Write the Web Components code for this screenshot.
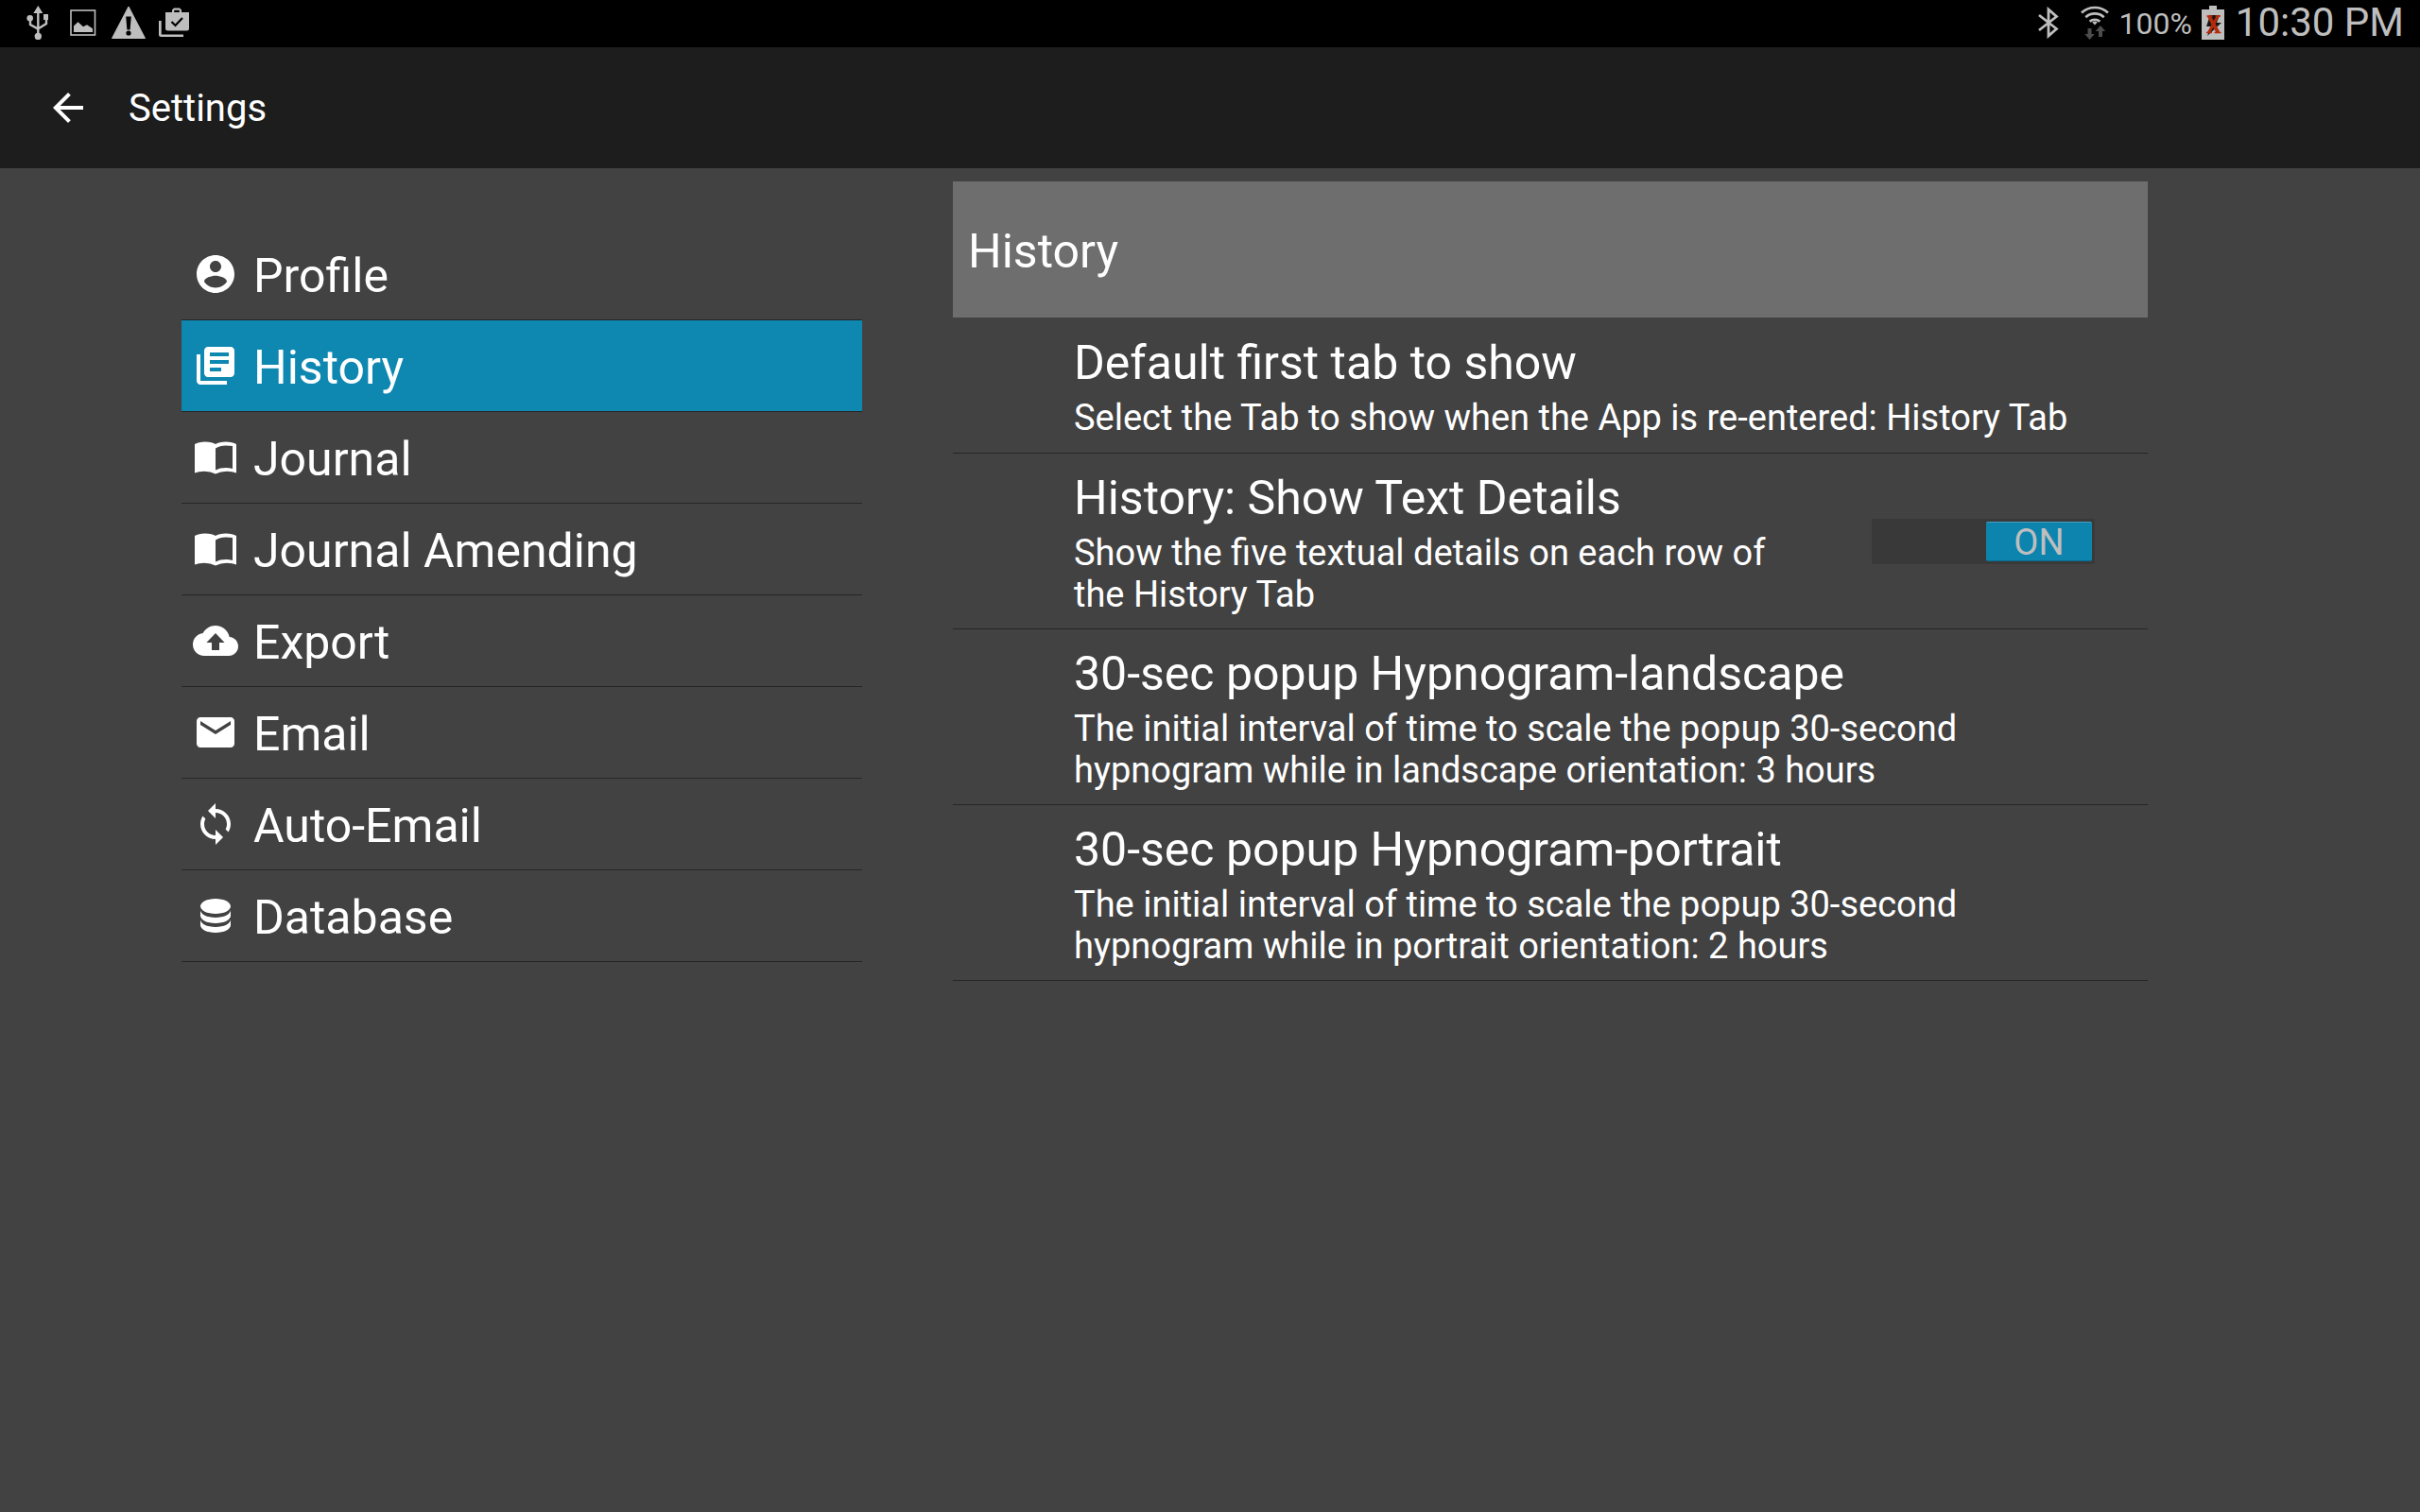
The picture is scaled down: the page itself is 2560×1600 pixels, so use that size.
<!DOCTYPE html>
<html lang="en">
<head>
<meta charset="utf-8">
<meta name="viewport" content="width=device-width, initial-scale=1">
<title>Settings</title>
<style>
  html, body { margin: 0; min-height: 100%; background: #424242; }
  body { font-family: Roboto, "Noto Sans", sans-serif; color: #fff; }
</style>
</head>
<body>
<settings-app>
  <status-bar slot="status" battery="100%" time="10:30 PM"></status-bar>
  <app-bar slot="bar">Settings</app-bar>
  <nav-list slot="nav">
    <nav-item icon="profile" href="#profile">Profile</nav-item>
    <nav-item icon="history" href="#history" selected>History</nav-item>
    <nav-item icon="book" href="#journal">Journal</nav-item>
    <nav-item icon="book" href="#journal-amending">Journal Amending</nav-item>
    <nav-item icon="upload" href="#export">Export</nav-item>
    <nav-item icon="mail" href="#email">Email</nav-item>
    <nav-item icon="sync" href="#auto-email">Auto-Email</nav-item>
    <nav-item icon="database" href="#database">Database</nav-item>
  </nav-list>
  <pref-panel slot="panel">
    <span slot="heading">History</span>
    <pref-row>
      <span slot="title">Default first tab to show</span>
      <span slot="summary">Select the Tab to show when the App is re-entered: History Tab</span>
    </pref-row>
    <pref-switch>
      <span slot="title">History: Show Text Details</span>
      <span slot="summary">Show the five textual details on each row of the History Tab</span>
    </pref-switch>
    <pref-row>
      <span slot="title">30-sec popup Hypnogram-landscape</span>
      <span slot="summary">The initial interval of time to scale the popup 30-second hypnogram while in landscape orientation: 3 hours</span>
    </pref-row>
    <pref-row>
      <span slot="title">30-sec popup Hypnogram-portrait</span>
      <span slot="summary">The initial interval of time to scale the popup 30-second hypnogram while in portrait orientation: 2 hours</span>
    </pref-row>
  </pref-panel>
</settings-app>

<script>
class Base extends HTMLElement {
  constructor() {
    super();
    this.attachShadow({ mode: 'open' });
  }
  connectedCallback() {
    this.shadowRoot.innerHTML =
      '<style>:host,*{box-sizing:border-box}' + this.styles() + '</style>' + this.markup();
  }
  styles() { return ''; }
  markup() { return '<slot></slot>'; }
}

class SettingsApp extends Base {
  styles() { return `
    :host { display: flex; flex-direction: column; min-height: 100vh; }
    main {
      display: grid; grid-template-columns: minmax(0, 45fr) minmax(0, 79fr);
      column-gap: 96px; align-items: start;
      padding: 14px 288px 32px 192px;
    }
    .nav { padding-top: 50px; }
  `; }
  markup() { return `
    <slot name="status"></slot>
    <slot name="bar"></slot>
    <main>
      <div class="nav"><slot name="nav"></slot></div>
      <slot name="panel"></slot>
    </main>`; }
}

/* Status-bar glyphs: width, height, left edge of the view box, shapes. */
const STATUS = {
  usb: [32, 36, 0, `<g fill="none" stroke="currentColor" stroke-width="2.4"><path d="M12.3 33V7M4 13v7l8.300 4.600M21 13v6l-8.700 5.600"/></g>
    <path fill="currentColor" d="M12.300 0L17.300 8H7.300zM18 9h5v6h-5z"/><circle cx="3.700" cy="13.200" r="3.300" fill="currentColor"/><circle cx="12.300" cy="32.500" r="3.700" fill="currentColor"/>`],
  photo: [28, 28, 0, `<rect x="1" y="1" width="25.500" height="26" fill="none" stroke="currentColor" stroke-width="1.600"/>
    <path fill="currentColor" d="M4 17.500l4.500-4.200 5.500 5 4-2 6 4v3.700H4z"/>`],
  warning: [38, 36, -2, `<path fill="currentColor" stroke="currentColor" stroke-linejoin="round" d="M18 1L35.500 34.500H.5z"/>
    <path fill="#000" d="M15.200 11.500h5.600l-1.200 14h-3.200z"/><circle cx="18" cy="29" r="2.600" fill="#000"/>`],
  tasks: [32, 32, 0, `<path fill="currentColor" fill-rule="evenodd" d="M14 5V2.500L16 .5h6l2 2V5h8v17a2.500 2.500 0 0 1-2.500 2.500h-20A2.500 2.500 0 0 1 7 22V5zM16.200 5h5.600V2.700h-5.600z"/>
    <path fill="none" stroke="#000" stroke-width="2.200" d="M13.500 15l4 4L25 11"/>
    <path fill="currentColor" d="M0 14h2.700v14.500H26V31H2.500A2.500 2.500 0 0 1 0 28.500z"/>`],
  bluetooth: [22, 34, 0, `<path fill="none" stroke="currentColor" stroke-width="2.800" d="M1 9l18.500 14.500L11 31V3l8.500 7.500L1 25"/>`],
  wifi: [30, 36, 0, `<g fill="none" stroke="currentColor" stroke-width="2.600"><path d="M1 7.500a20.500 20.500 0 0 1 28 0M5.300 12.200a14.300 14.300 0 0 1 19.400 0M9.600 16.800a8 8 0 0 1 10.800 0"/></g>
    <path fill="currentColor" d="M12.200 17.600q2.800-2 5.600 0L15 20.500z"/>
    <path fill="#4c4c4c" d="M7.500 24h4v6h3.200l-5.200 6-5.200-6h3.200zM19 33h4v-6h3.200L21 21l-5.200 6H19z"/>`],
  battery: [24, 36, 0, `<path fill="currentColor" d="M8 0h8v4h8v32H0V4h8z"/>
    <path fill="#161616" d="M9 10h10l-3 8h5L6 32l4-10H5z"/>
    <g fill="none" stroke="#b52b0b"><path stroke-width="3.800" d="M7.500 10.500l10 18"/><path stroke-width="3" d="M17.500 10.500l-10 18"/><path stroke-width="1.400" d="M5.500 11h6M14.500 11h5.500M5 28.500h6M13.500 28.500h7"/></g>`]
};
const statusIcon = n => {
  const [w, h, x, body] = STATUS[n];
  return `<svg width="${w}" height="${h}" viewBox="${x} 0 ${w} ${h}" aria-hidden="true">${body}</svg>`;
};

class StatusBar extends Base {
  styles() { return `
    :host { display: flex; align-items: center; justify-content: space-between; height: 50px;
      padding: 0 17px 2px 28px; background: #000; color: #bebebe; }
    div { display: flex; align-items: center; }
    svg { display: block; flex: none; }
    .left { gap: 14px; }
    .right { gap: 10px; }
    .radio { display: flex; gap: 23px; }
    .battery { font-size: 32px; line-height: 40px; padding-top: 2px; }
    time { font-size: 42px; line-height: 48px; padding-left: 2px; }
  `; }
  markup() { return `
    <div class="left">${['usb', 'photo', 'warning', 'tasks'].map(statusIcon).join('')}</div>
    <div class="right">
      <div class="radio">${statusIcon('bluetooth')}${statusIcon('wifi')}</div>
      <span class="battery">${this.getAttribute('battery')}</span>
      ${statusIcon('battery')}
      <time>${this.getAttribute('time')}</time>
    </div>`; }
}

class AppBar extends Base {
  styles() { return `
    :host { display: flex; align-items: center; gap: 40px; min-height: 128px; padding: 0 48px; background: #1d1d1d; }
    button { appearance: none; border: 0; padding: 0; margin: 0; background: none; color: inherit; display: flex; }
    h1 { margin: 0; padding-top: 2px; font-size: 40px; line-height: 44px; font-weight: 400; }
  `; }
  markup() { return `
    <button type="button" aria-label="Back">
      <svg width="48" height="48" viewBox="0 0 24 24" fill="currentColor"><path d="M20 11H7.830l5.590-5.590L12 4l-8 8 8 8 1.410-1.410L7.830 13H20v-2z"/></svg>
    </button>
    <h1><slot></slot></h1>`; }
}

class NavList extends Base {
  styles() { return `nav { display: flex; flex-direction: column; }`; }
  markup() { return `<nav aria-label="Settings sections"><slot></slot></nav>`; }
}

const ICONS = {
  profile: '<path d="M12 2C6.480 2 2 6.480 2 12s4.480 10 10 10 10-4.480 10-10S17.520 2 12 2zm0 3c1.660 0 3 1.340 3 3s-1.340 3-3 3-3-1.340-3-3 1.340-3 3-3zm0 14.200c-2.500 0-4.710-1.280-6-3.220.03-1.990 4-3.080 6-3.080 1.990 0 5.970 1.090 6 3.080-1.290 1.940-3.500 3.220-6 3.220z"/>',
  history: '<path d="M4 6H2v14c0 1.100.9 2 2 2h14v-2H4V6zm16-4H8c-1.100 0-2 .9-2 2v12c0 1.100.9 2 2 2h12c1.100 0 2-.9 2-2V4c0-1.100-.9-2-2-2zm-1 5H9V5h10v2zm0 4H9V9h10v2zm-4 4H9v-2h6v2z"/>',
  book: '<path d="M12 5Q10.300 3.700 6.500 3.700 3 3.700 1 5v15.300q2-.9 5-.9 3.500 0 6 1.300 2.500-1.300 6-1.300 3 0 5 .9V5q-2-1.300-5.500-1.300Q13.700 3.700 12 5zM21 6v12q-1.600-.5-3.500-.5-3.300 0-5.500 1.200V7.200q2.200-1.500 5.500-1.500 1.900 0 3.500.3z"/>',
  upload: '<path d="M19.350 10.040C18.670 6.590 15.640 4 12 4 9.110 4 6.600 5.640 5.350 8.040 2.340 8.360 0 10.910 0 14c0 3.310 2.690 6 6 6h13c2.760 0 5-2.240 5-5 0-2.640-2.050-4.780-4.650-4.960zM14 13v4h-4v-4H7.200L12 8l4.800 5H14z"/>',
  mail: '<path d="M20 4H4c-1.100 0-1.990.9-1.990 2L2 18c0 1.100.9 2 2 2h16c1.100 0 2-.9 2-2V6c0-1.100-.9-2-2-2zm0 4l-8 5-8-5V6l8 5 8-5v2z"/>',
  sync: '<path d="M12 4V1L8 5l4 4V6c3.310 0 6 2.690 6 6 0 1.010-.25 1.970-.7 2.800l1.460 1.460C19.540 15.030 20 13.570 20 12c0-4.420-3.580-8-8-8zm0 14c-3.310 0-6-2.690-6-6 0-1.010.25-1.970.7-2.800L5.240 7.740C4.460 8.970 4 10.430 4 12c0 4.420 3.580 8 8 8v3l4-4-4-4v3z"/>',
  database: '<path d="M12 3C7.580 3 4 4.790 4 7s3.580 4 8 4 8-1.790 8-4-3.580-4-8-4zM4 9v3c0 2.210 3.580 4 8 4s8-1.790 8-4V9c0 2.210-3.580 4-8 4s-8-1.790-8-4zm0 5v3c0 2.210 3.580 4 8 4s8-1.790 8-4v-3c0 2.210-3.580 4-8 4s-8-1.790-8-4z"/>'
};

class NavItem extends Base {
  styles() { return `
    :host { display: block; border-bottom: 1px solid #262626; }
    :host([selected]) { background: #0e87b1; }
    a { display: flex; align-items: center; gap: 16px; min-height: 96px; padding: 0 12px; color: inherit; text-decoration: none; }
    svg { flex: none; display: block; }
    span { font-size: 50px; line-height: 56px; padding-top: 4px; }
  `; }
  markup() { return `
    <a href="${this.getAttribute('href')}"${this.hasAttribute('selected') ? ' aria-current="page"' : ''}>
      <svg width="48" height="48" viewBox="0 0 24 24" fill="currentColor" aria-hidden="true">${ICONS[this.getAttribute('icon')]}</svg>
      <span><slot></slot></span>
    </a>`; }
}

class PrefPanel extends Base {
  styles() { return `
    :host { display: block; }
    header { display: flex; align-items: center; min-height: 144px; padding: 4px 16px 0; background: #6e6e6e; }
    h2 { margin: 0; font-size: 50px; line-height: 56px; font-weight: 400; }
  `; }
  markup() { return `
    <section><header><h2><slot name="heading"></slot></h2></header><slot></slot></section>`; }
}

const ROW_CSS = `
  :host { display: block; border-bottom: 1px solid #262626; }
  .row { display: flex; align-items: center; width: 100%; min-height: 143px; margin: 0; border: 0;
    padding: 19px 32px 14px 128px; background: none; color: inherit; font-family: inherit; text-align: left; }
  .text { display: flex; flex-direction: column; gap: 8px; flex: 1; min-width: 0; }
  .title { font-size: 50px; line-height: 56px; }
  .summary { font-size: 38px; line-height: 44px; }
`;

class PrefRow extends Base {
  styles() { return ROW_CSS; }
  markup() { return `
    <button type="button" class="row">
      <span class="text">
        <span class="title"><slot name="title"></slot></span>
        <span class="summary"><slot name="summary"></slot></span>
      </span>
    </button>`; }
}

class PrefSwitch extends Base {
  styles() { return ROW_CSS + `
    :host { position: relative; }
    .row { gap: 56px; padding: 0 56px 0 128px; }
    .text { padding: 19px 0 14px; }
    input { position: absolute; inset: 0; width: 100%; height: 100%; margin: 0; opacity: 0; }
    .track { display: flex; flex: none; width: 236px; height: 48px; padding: 3px; background: #393939; }
    .thumb { display: flex; align-items: center; justify-content: center; width: 112px; border-radius: 2px;
      background: #0c84ae; color: #bebebe; font-size: 38px; line-height: 40px; padding-top: 2px;
      border-top: 1px solid #4a9dbd; border-bottom: 1px solid #09688a; }
    input:checked ~ .track { justify-content: flex-end; }
    input:not(:checked) ~ .track .thumb { background: #5a5a5a; border-color: #6e6e6e; }
  `; }
  markup() { return `
    <label class="row">
      <span class="text">
        <span class="title"><slot name="title"></slot></span>
        <span class="summary"><slot name="summary"></slot></span>
      </span>
      <input type="checkbox" role="switch" checked>
      <span class="track"><span class="thumb">ON</span></span>
    </label>`; }
  connectedCallback() {
    super.connectedCallback();
    const input = this.shadowRoot.querySelector('input');
    const thumb = this.shadowRoot.querySelector('.thumb');
    input.addEventListener('change', () => { thumb.textContent = input.checked ? 'ON' : 'OFF'; });
  }
}

customElements.define('status-bar', StatusBar);
customElements.define('app-bar', AppBar);
customElements.define('nav-item', NavItem);
customElements.define('nav-list', NavList);
customElements.define('pref-row', PrefRow);
customElements.define('pref-switch', PrefSwitch);
customElements.define('pref-panel', PrefPanel);
customElements.define('settings-app', SettingsApp);
</script>
</body>
</html>
